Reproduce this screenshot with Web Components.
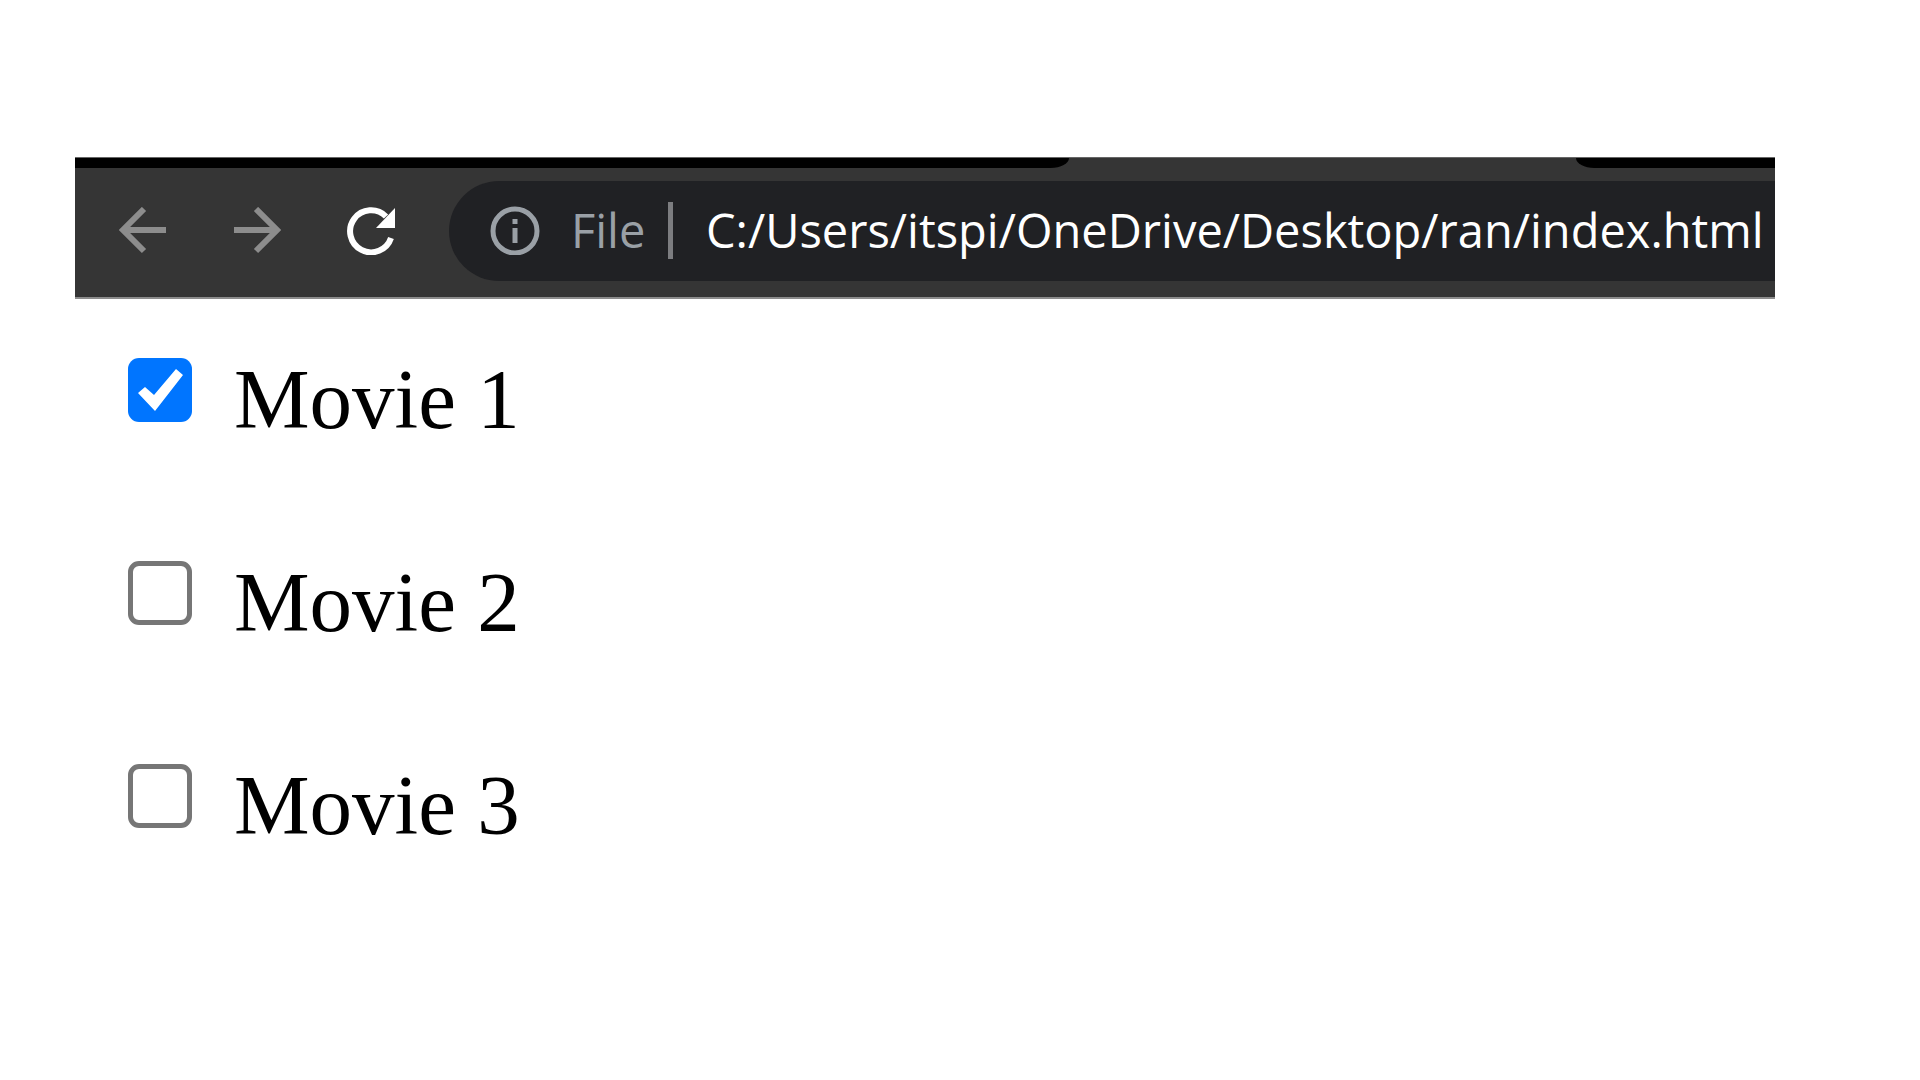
<!DOCTYPE html>
<html lang="en">
<head>
<meta charset="utf-8">
<title>Movies</title>
<style>
body { margin: 0; background: #fff; }
</style>
</head>
<body>
<movie-page></movie-page>
<script>
const define = (name, html, setup) => customElements.define(name, class extends HTMLElement {
  connectedCallback() {
    if (this.shadowRoot) return;
    this.attachShadow({ mode: 'open' }).innerHTML = html;
    if (setup) setup(this, this.shadowRoot);
  }
});

define('tab-strip', `
<style>
:host { display: flex; height: 10px; background: #353535; }
.before { flex: 994; background: #000; border-bottom-right-radius: 22px 12px; }
.active { flex: 507; }
.after { flex: 199; background: #000; border-bottom-left-radius: 22px 12px; }
</style>
<div class="before"></div><div class="active"></div><div class="after"></div>`);

define('nav-button', `
<style>
:host { display: block; flex: none; }
button { display: block; width: 48px; height: 48px; padding: 0; border: 0; background: none; color: inherit; }
::slotted(svg) { display: block; width: 48px; height: 48px; }
</style>
<button type="button"><slot></slot></button>`, (host, root) => {
  root.querySelector('button').setAttribute('aria-label', host.getAttribute('label'));
});

define('address-bar', `
<style>
:host { display: flex; align-items: center; flex: 1; min-width: 0; height: 100px; box-sizing: border-box;
  padding: 0 0 2px 41px; background: #202124; border-radius: 50px 0 0 50px; font: 47px/68px "Open Sans", sans-serif; }
svg { flex: none; width: 50px; height: 50px; margin-right: 31px; }
label { flex: none; color: #9aa0a6; width: 97px; }
.rule { flex: none; width: 5px; height: 57px; background: #7c7d80; margin-right: 33px; }
input { flex: 1; min-width: 0; height: 68px; padding: 0; border: 0; outline: 0; background: none; color: #fff; font: inherit; }
</style>
<svg viewBox="0 0 50 50" fill="none" stroke="#9aa0a6"><circle cx="25" cy="26" r="22" stroke-width="5"/><path d="M25 23v15M25 14v5" stroke-width="5"/></svg>
<label for="url">File</label><span class="rule"></span>
<input id="url" type="text" value="C:/Users/itspi/OneDrive/Desktop/ran/index.html" spellcheck="false">`);

define('browser-bar', `
<style>
:host { display: block; background: #353535; border-top: 1px solid #666; border-bottom: 2px solid #8c8c8c; }
nav { display: flex; align-items: center; padding: 13px 0 16px 44px; color: #8d8d8d; }
.buttons { display: flex; gap: 66px; margin-right: 54px; }
.reload { color: #fff; }
</style>
<tab-strip></tab-strip>
<nav>
  <div class="buttons">
    <nav-button label="Back"><svg viewBox="0 0 48 48" fill="none" stroke="currentColor" stroke-width="6"><path d="M47 23H4M25 2 4 23l21 21"/></svg></nav-button>
    <nav-button label="Forward"><svg viewBox="0 0 48 48" fill="none" stroke="currentColor" stroke-width="6"><path d="M1 23h43M23 2l21 21-21 21"/></svg></nav-button>
    <nav-button class="reload" label="Reload"><svg viewBox="0 0 48 48"><path d="M44 31A21 21 0 1 1 39 9.500" fill="none" stroke="currentColor" stroke-width="6"/><path d="M48 1v20H29z" fill="currentColor"/></svg></nav-button>
  </div>
  <address-bar></address-bar>
</nav>`);

define('movie-option', `
<style>
:host { display: block; }
label { display: flex; align-items: flex-start; gap: 42px; font: 85px/98px "Liberation Serif", serif; color: #000; }
input { appearance: none; flex: none; width: 64px; height: 64px; box-sizing: border-box; margin: 8px 0 0;
  border: 5px solid #767676; border-radius: 11px; background: #fff; }
input:checked { border: 0; background: #0075ff; }
input:checked::before { content: ""; display: block; width: 64px; height: 64px; background: #fff;
  clip-path: polygon(10px 35px, 17px 29px, 26px 37px, 48px 11px, 55px 17px, 27px 53px); }
</style>
<label><input type="checkbox"><span><slot></slot></span></label>`, (host, root) => {
  root.querySelector('input').checked = host.hasAttribute('checked');
});

define('movie-page', `
<style>
:host { display: block; padding: 157px 145px 0 75px; }
main { display: grid; gap: 105px; padding: 51px 0 0 53px; }
</style>
<browser-bar></browser-bar>
<main>
  <movie-option checked>Movie 1</movie-option>
  <movie-option>Movie 2</movie-option>
  <movie-option>Movie 3</movie-option>
</main>`);
</script>
</body>
</html>
